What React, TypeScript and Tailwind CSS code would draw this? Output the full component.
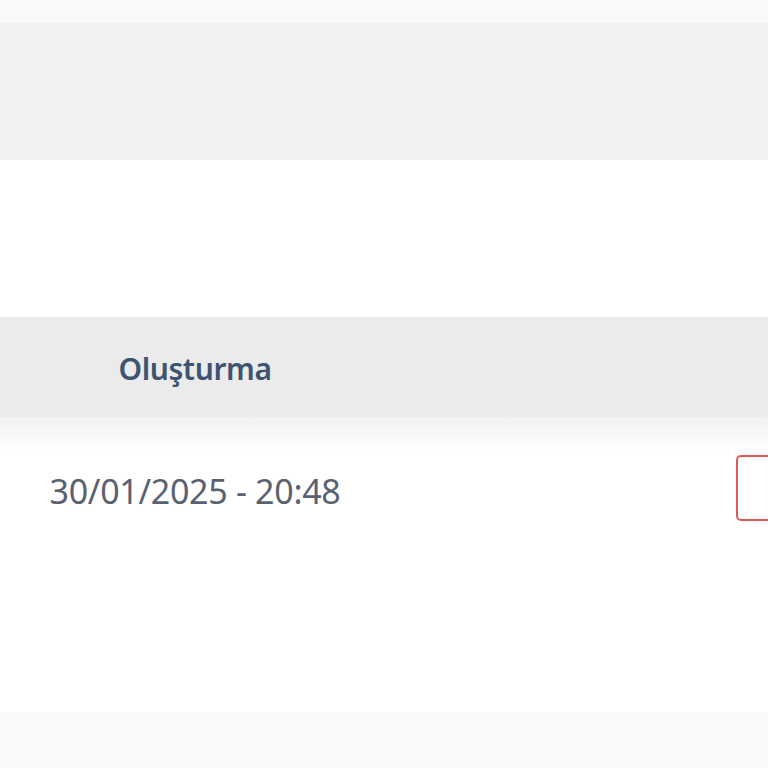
import React from "react";

const font = { fontFamily: '"Noto Sans", "Open Sans", sans-serif' };

export default function App() {
  return (
    <main className="min-h-[768px] w-[768px] overflow-hidden bg-white" style={font}>
      <div className="h-[23px] bg-[#f9f9f9]" />
      <div className="h-[137px] bg-[#f2f2f2]" />
      <div className="h-[157px] bg-white" />

      {/* table header */}
      <div className="flex h-[100px] items-center bg-[#ebebeb]">
        <div className="w-[390px] shrink-0 pt-[3px] text-center text-[30px] font-semibold tracking-[-0.4px] text-[#3d5372]">
          Oluşturma
        </div>
      </div>

      {/* table row */}
      <div className="relative h-[295px] bg-white">
        <div className="absolute inset-x-0 top-0 h-[36px] bg-gradient-to-b from-[#f1f1f1] to-white" />
        <div className="relative flex w-[900px] items-center pt-[38px]">
          <div className="w-[390px] shrink-0 pt-[6px] text-center text-[34px] tracking-[-0.3px] text-[#5a6171]">
            30/01/2025 - 20:48
          </div>
          <div className="ml-[346px] h-[66px] w-[80px] shrink-0 rounded-[5px] border-2 border-[#dc5b55] bg-white" />
        </div>
      </div>

      <div className="h-[56px] bg-[#f9f9f9]" />
    </main>
  );
}
